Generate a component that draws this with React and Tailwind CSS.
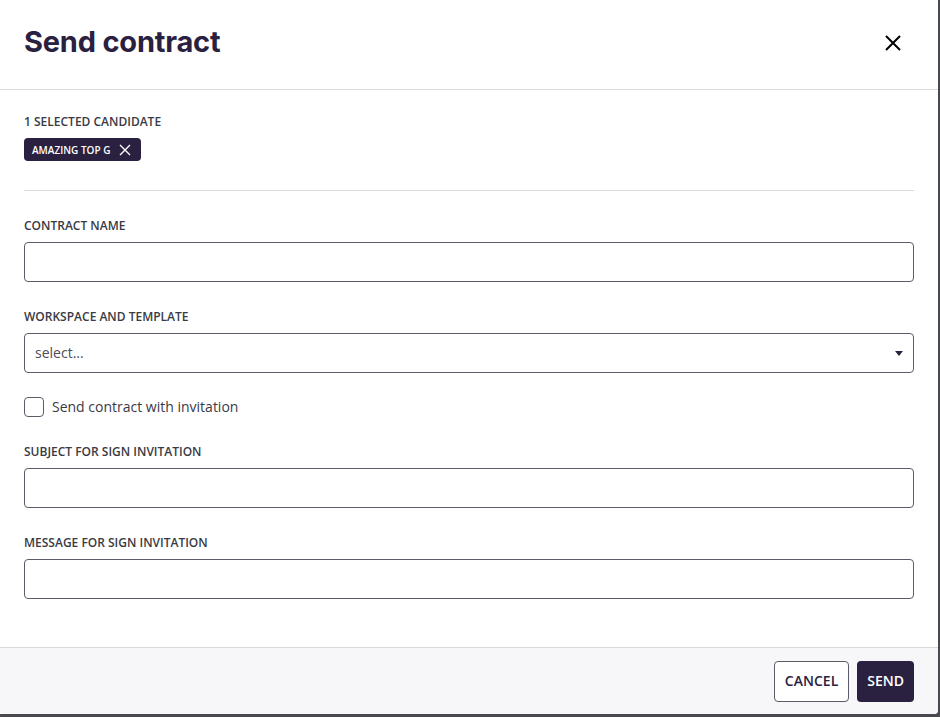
const Label = ({ children }) => (
  <div className="text-xs leading-[18px] font-semibold text-[#3a3a44] uppercase">
    {children}
  </div>
);

const TextInput = () => (
  <div className="mt-[7px] h-10 w-full rounded border border-[#5e5b68] bg-white" />
);

const App = () => {
  return (
    <div
      className="w-[940px] h-[717px] bg-[#4a494f] overflow-hidden"
      style={{ fontFamily: '"Open Sans", sans-serif' }}
    >
      <div className="w-[938px] h-[714px] bg-white flex flex-col rounded-br">
        {/* header */}
        <div className="h-[90px] shrink-0 border-b border-[#d9d9dc] flex items-center justify-between pl-6 pr-[36px]">
          <h1
            className="text-[29px] font-bold text-[#2a2140] tracking-[-0.2px] -mt-[6px]"
            style={{ fontFamily: "Inter, sans-serif" }}
          >
            Send contract
          </h1>
          <button className="-mt-[4px] text-black">
            <svg width="18" height="18" viewBox="0 0 18 18" fill="none" stroke="currentColor" strokeWidth="2">
              <path d="M2 2l14 14M16 2L2 16" />
            </svg>
          </button>
        </div>

        {/* body */}
        <div className="flex-1 px-6 pt-[23px]">
          <Label>1 selected candidate</Label>
          <div className="mt-[7px] inline-flex items-center h-[23px] rounded bg-[#2a2140] pl-2 pr-[10px] gap-[9px]">
            <span className="text-[10px] font-semibold text-white leading-none">AMAZING TOP G</span>
            <svg width="12" height="12" viewBox="0 0 12 12" fill="none" stroke="white" strokeWidth="1.4">
              <path d="M1 1l10 10M11 1L1 11" />
            </svg>
          </div>
          <div className="mt-[29px] h-px bg-[#d9d9dc]" />

          <div className="mt-[26px]">
            <Label>Contract name</Label>
            <TextInput />
          </div>

          <div className="mt-[26px]">
            <Label>Workspace and template</Label>
            <div className="mt-[7px] h-10 w-full rounded border border-[#5e5b68] bg-white flex items-center justify-between pl-[10px] pr-[10px]">
              <span className="text-sm text-[#4d4d55]">select...</span>
              <svg width="8" height="5" viewBox="0 0 8 5">
                <path d="M0 0h8L4 5z" fill="#2a2140" />
              </svg>
            </div>
          </div>

          <label className="mt-[24px] flex items-center gap-2">
            <span className="w-5 h-5 rounded-[4px] border border-[#5e5b68] bg-white" />
            <span className="text-sm text-[#3a3a44]">Send contract with invitation</span>
          </label>

          <div className="mt-[26px]">
            <Label>Subject for sign invitation</Label>
            <TextInput />
          </div>

          <div className="mt-[26px]">
            <Label>Message for sign invitation</Label>
            <TextInput />
          </div>
        </div>

        {/* footer */}
        <div className="h-[67px] shrink-0 border-t border-[#d9d9dc] bg-[#f7f7f9] flex items-center justify-end gap-2 pr-6 rounded-b">
          <button className="h-[41px] px-[10px] rounded border border-[#5e5b68] bg-white text-sm font-semibold text-[#2a2140]">
            CANCEL
          </button>
          <button className="h-[41px] px-[10px] rounded bg-[#2a2140] text-sm font-semibold text-white">
            SEND
          </button>
        </div>
      </div>
    </div>
  );
};

export default App;
